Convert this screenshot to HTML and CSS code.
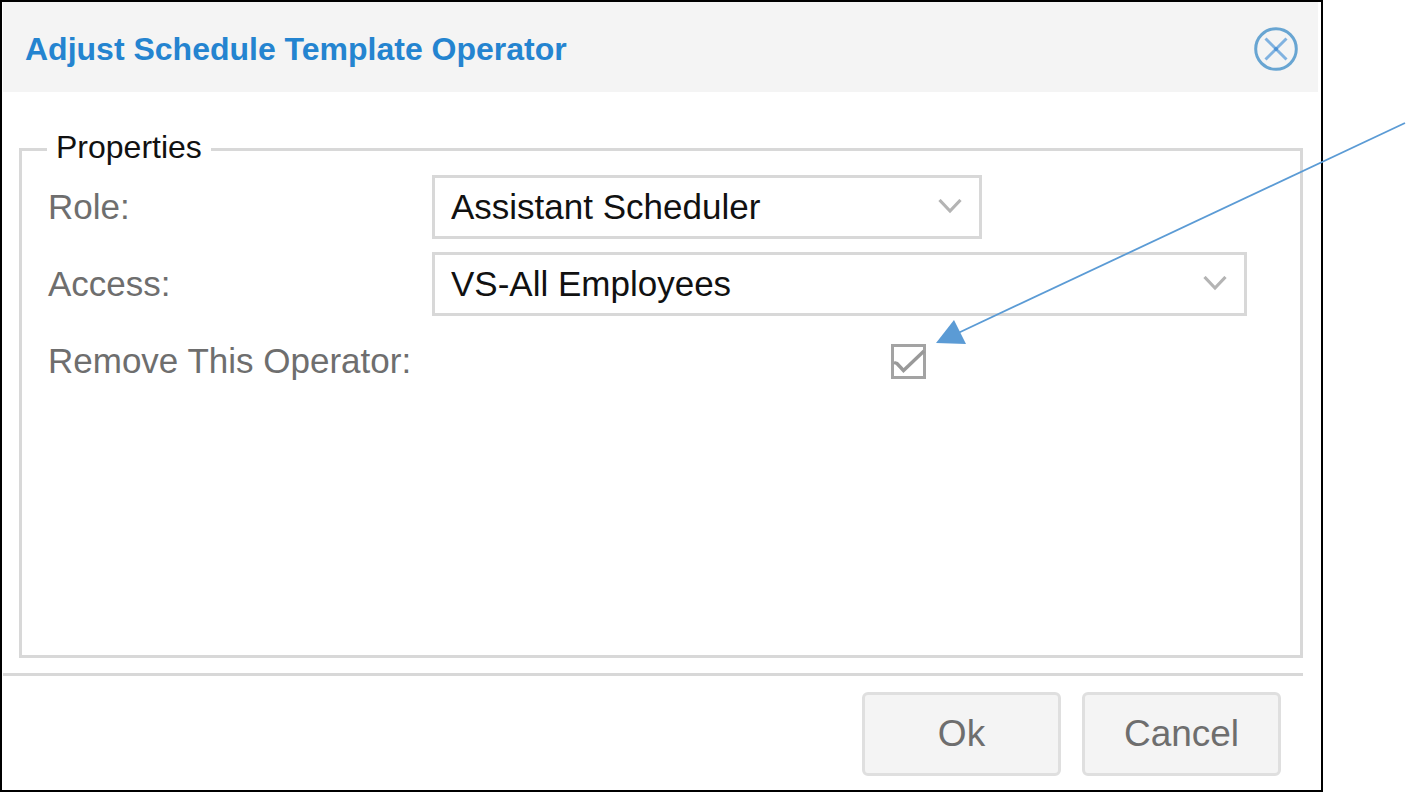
FILE: index.html
```html
<!DOCTYPE html>
<html lang="en">
<head>
<meta charset="utf-8">
<title>Adjust Schedule Template Operator</title>
<link rel="stylesheet" href="styles.css">
</head>
<body>
<main class="dialog" role="dialog" aria-labelledby="dialog-title">
  <header class="dialog-header">
    <h1 class="dialog-title" id="dialog-title">Adjust Schedule Template Operator</h1>
    <button class="close" type="button" aria-label="Close">
      <svg class="close-icon" viewBox="0 0 44 44" fill="none">
        <circle cx="22" cy="22" r="20.3" stroke="#68a5d2" stroke-width="3"/>
        <path d="M11.5 11.5L32.5 32.5M32.5 11.5L11.5 32.5" stroke="#80b2e0" stroke-width="3"/>
        <circle cx="22" cy="22" r="2" fill="#4a90d4"/>
      </svg>
    </button>
  </header>
  <form class="dialog-form">
    <fieldset class="properties">
      <legend class="legend">Properties</legend>
      <div class="row">
        <label class="label" for="role">Role:</label>
        <div class="picker picker-role">
          <select class="select" id="role"><option>Assistant Scheduler</option></select>
          <svg class="chevron" viewBox="0 0 24 16" fill="none"><path d="M1.5 1L12 12L22.5 1" stroke="#b4b4b4" stroke-width="3.2"/></svg>
        </div>
      </div>
      <div class="row">
        <label class="label" for="access">Access:</label>
        <div class="picker picker-access">
          <select class="select" id="access"><option>VS-All Employees</option></select>
          <svg class="chevron" viewBox="0 0 24 16" fill="none"><path d="M1.5 1L12 12L22.5 1" stroke="#b4b4b4" stroke-width="3.2"/></svg>
        </div>
      </div>
      <div class="row">
        <label class="label" for="remove">Remove This Operator:</label>
        <div class="check">
          <input class="check-input" type="checkbox" id="remove" checked>
          <svg class="check-mark" viewBox="0 0 35 35" fill="none"><path d="M3 18.5L6 19.5L12.5 26.5L33 7" stroke="#999" stroke-width="3.4"/></svg>
          <svg class="callout" viewBox="0 0 470 223" aria-hidden="true">
            <path d="M20 212L469 1" stroke="#5b9bd5" stroke-width="1.8"/>
            <path d="M0 221L18 198L30 222Z" fill="#5b9bd5"/>
          </svg>
        </div>
      </div>
    </fieldset>
    <footer class="actions">
      <button class="button" type="button">Ok</button>
      <button class="button" type="button">Cancel</button>
    </footer>
  </form>
</main>
</body>
</html>
```
FILE: styles.css
```css
* {
  box-sizing: border-box;
}

body {
  margin: 0;
  background: #fff;
  font-family: "Liberation Sans", Arial, sans-serif;
  font-size: 35px;
  line-height: 40px;
  color: #6e6e6e;
}

.dialog {
  display: flex;
  flex-direction: column;
  min-height: 100vh;
  margin-right: 83px;
  border: 2px solid #000;
}

.dialog-header {
  display: flex;
  align-items: center;
  justify-content: space-between;
  min-height: 90px;
  margin: 0 3px 0 1px;
  padding: 4px 20px 0 22px;
  background: #f4f4f4;
}

.dialog-title {
  margin: 0;
  font-size: 32px;
  line-height: 36px;
  font-weight: bold;
  color: #2484d0;
}

.close {
  padding: 0;
  border: 0;
  background: none;
}

.close-icon {
  display: block;
  width: 44px;
  height: 44px;
}

.dialog-form {
  display: flex;
  flex: 1;
  flex-direction: column;
  padding: 37px 18px 0 1px;
}

.properties {
  display: flex;
  flex: 1;
  flex-direction: column;
  gap: 13px;
  min-width: 0;
  margin: 0 0 15px 16px;
  padding: 5px 0 0 26px;
  border: 3px solid #d8d8d8;
}

.legend {
  margin-left: -1px;
  padding: 0 9px 5px;
  font-size: 32px;
  line-height: 36px;
  color: #111;
}

.row {
  display: grid;
  grid-template-columns: 384px minmax(0, 1fr);
  align-items: center;
  min-height: 64px;
}

.picker {
  display: grid;
  align-items: center;
  max-width: 100%;
}

.picker-role {
  width: 550px;
}

.picker-access {
  width: 815px;
}

.select {
  grid-area: 1 / 1;
  width: 100%;
  height: 64px;
  padding: 0 16px;
  appearance: none;
  border: 3px solid #d8d8d8;
  border-radius: 0;
  background: #fff;
  font: inherit;
  color: #111;
}

.chevron {
  grid-area: 1 / 1;
  justify-self: end;
  width: 24px;
  height: 16px;
  margin-right: 20px;
  pointer-events: none;
}

.check {
  position: relative;
  display: grid;
  width: 35px;
  margin-left: 459px;
}

.check-input {
  grid-area: 1 / 1;
  width: 35px;
  height: 35px;
  margin: 0;
  appearance: none;
  border: 3px solid #a3a3a3;
  background: #fff;
}

.check-mark {
  grid-area: 1 / 1;
  width: 35px;
  height: 35px;
  pointer-events: none;
}

.callout {
  position: absolute;
  left: 45px;
  bottom: 34px;
  width: 470px;
  height: 223px;
  pointer-events: none;
}

.actions {
  display: flex;
  justify-content: flex-end;
  gap: 21px;
  padding: 16px 22px 14px 0;
  border-top: 3px solid #d8d8d8;
}

.button {
  width: 199px;
  height: 84px;
  border: 3px solid #dfdfdf;
  border-radius: 6px;
  background: #f4f4f4;
  font: inherit;
  font-size: 37px;
  color: #6e6e6e;
}
```
